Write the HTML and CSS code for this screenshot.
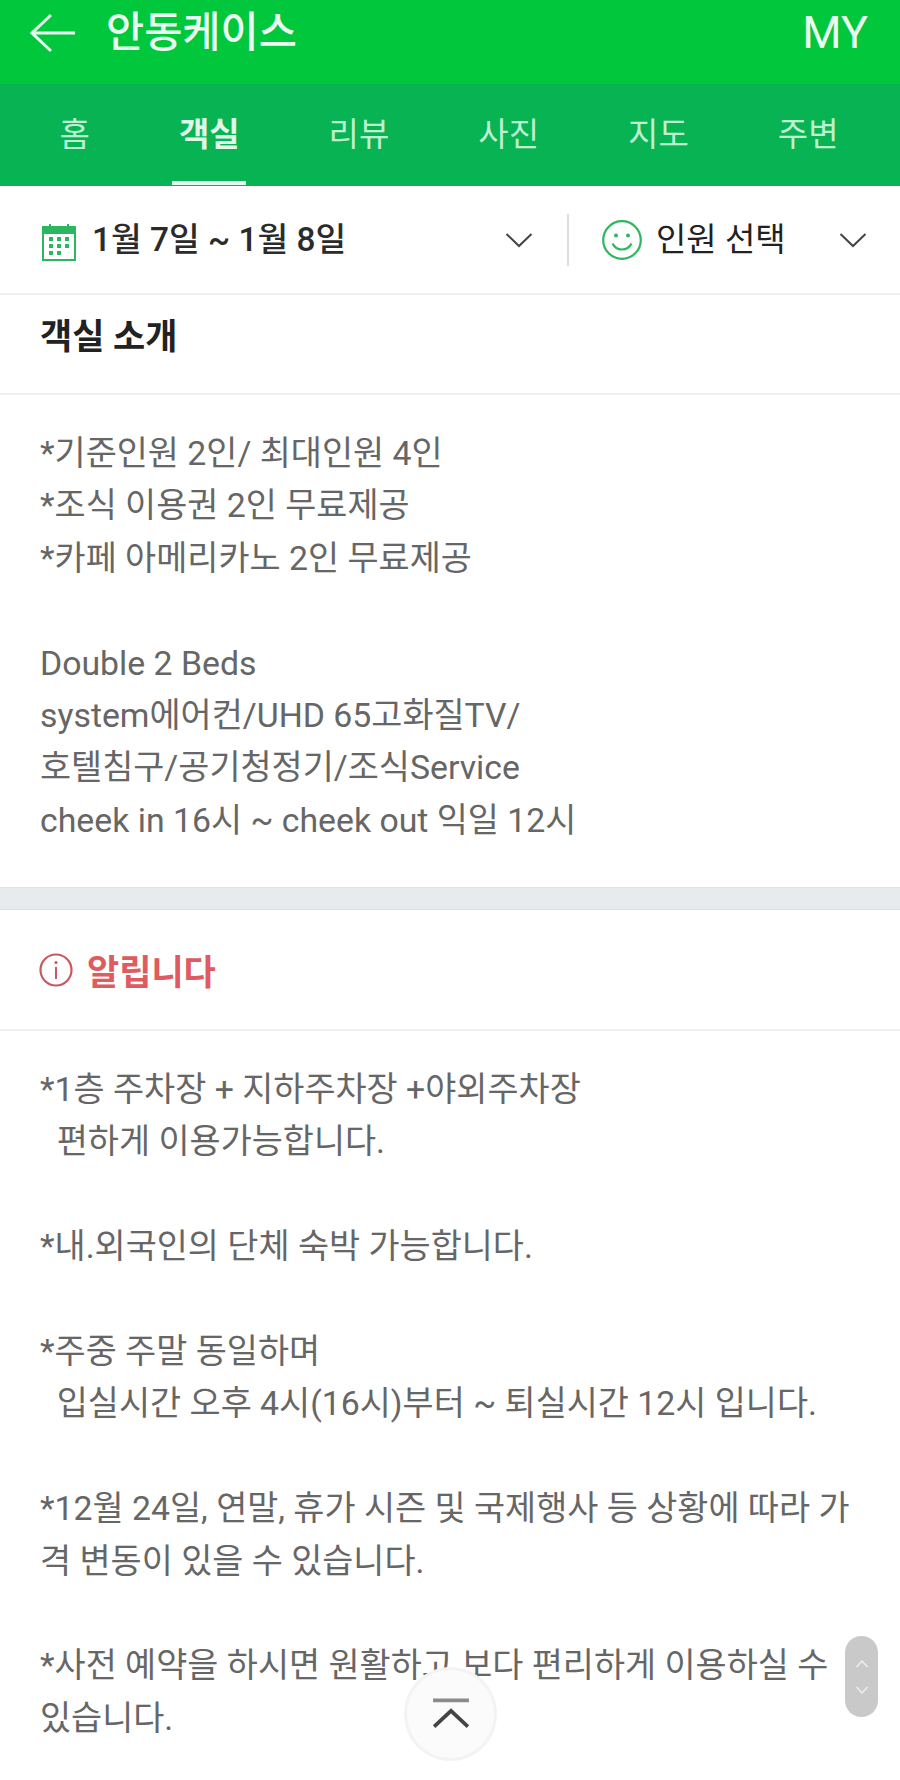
FILE: index.html
```html
<!DOCTYPE html>
<html lang="ko">
<head>
<meta charset="utf-8">
<title>안동케이스</title>
<link rel="stylesheet" href="styles.css">
</head>
<body>
<div class="page">
  <header class="topbar">
    <svg class="back" viewBox="0 0 46 40" aria-hidden="true"><path d="M45 20H2M21 2 2 20l19 18" fill="none" stroke="#e8fbee" stroke-width="3"/></svg>
    <h1 class="brand">안동케이스</h1>
    <span class="my">MY</span>
  </header>
  <nav class="tabs">
    <a class="tab">홈</a>
    <a class="tab active">객실</a>
    <a class="tab">리뷰</a>
    <a class="tab">사진</a>
    <a class="tab">지도</a>
    <a class="tab">주변</a>
  </nav>
  <div class="filter">
    <div class="filter-date">
      <svg class="cal" viewBox="0 0 34 38" aria-hidden="true">
        <rect x="1" y="4" width="32" height="33" fill="none" stroke="#2bb75f" stroke-width="2"/>
        <rect x="1" y="4" width="32" height="7" fill="#2bb75f"/>
        <path d="M8 1v5M26 1v5" stroke="#2bb75f" stroke-width="2"/>
        <path fill="#2bb75f" d="M7 14h4v4H7zM15 14h4v4h-4zM23 14h4v4h-4zM7 21h4v4H7zM15 21h4v4h-4zM23 21h4v4h-4zM7 28h4v4H7zM15 28h4v4h-4z"/>
      </svg>
      <span class="date-text">1월 7일 ~ 1월 8일</span>
      <svg class="chev" viewBox="0 0 28 16" aria-hidden="true"><path d="M1.5 2 14 14 26.5 2" fill="none" stroke="#444" stroke-width="2"/></svg>
    </div>
    <div class="filter-people">
      <svg class="smile" viewBox="0 0 40 40" aria-hidden="true">
        <circle cx="20" cy="20" r="18.8" fill="none" stroke="#2bb75f" stroke-width="2.2"/>
        <circle cx="14" cy="15.5" r="2" fill="#2bb75f"/>
        <circle cx="26" cy="15.5" r="2" fill="#2bb75f"/>
        <path d="M10.5 23.5c2 4 5.500 6 9.500 6s7.500-2 9.500-6" fill="none" stroke="#2bb75f" stroke-width="2.2"/>
      </svg>
      <span class="people-text">인원 선택</span>
      <svg class="chev" viewBox="0 0 28 16" aria-hidden="true"><path d="M1.5 2 14 14 26.5 2" fill="none" stroke="#444" stroke-width="2"/></svg>
    </div>
  </div>
  <section>
    <h2 class="sec-title">객실 소개</h2>
    <div class="sec-body room-body">*기준인원 2인/ 최대인원 4인
*조식 이용권 2인 무료제공
*카페 아메리카노 2인 무료제공

Double 2 Beds
system에어컨/UHD 65고화질TV/
호텔침구/공기청정기/조식Service
cheek in 16시 ~ cheek out 익일 12시</div>
  </section>
  <div class="band"></div>
  <section>
    <h2 class="notice-title">
      <svg class="info" viewBox="0 0 34 34" aria-hidden="true">
        <circle cx="17" cy="17" r="15.500" fill="none" stroke="#c9595f" stroke-width="2.2"/>
        <circle cx="17" cy="9.500" r="1.600" fill="#c9595f"/>
        <path d="M17 14v12" stroke="#c9595f" stroke-width="2"/>
      </svg>
      알립니다
    </h2>
    <div class="sec-body notice-body">*1층 주차장 + 지하주차장 +야외주차장
  편하게 이용가능합니다.

*내.외국인의 단체 숙박 가능합니다.

*주중 주말 동일하며
  입실시간 오후 4시(16시)부터 ~ 퇴실시간 12시 입니다.

*12월 24일, 연말, 휴가 시즌 및 국제행사 등 상황에 따라 가격 변동이 있을 수 있습니다.

*사전 예약을 하시면 원활하고 보다 편리하게 이용하실 수 있습니다.</div>
  </section>
  <button class="to-top" aria-label="맨 위로">
    <svg viewBox="0 0 36 30" aria-hidden="true"><path d="M1 2h34" stroke="#8a8a8a" stroke-width="3.500"/><path d="M2 27 18 12l16 15" fill="none" stroke="#444" stroke-width="3.500"/></svg>
  </button>
  <div class="scroller">
    <svg viewBox="0 0 14 12" aria-hidden="true"><path d="M1.500 9 7 3l5.500 6" fill="none" stroke="#eee" stroke-width="1.500"/></svg>
    <svg viewBox="0 0 14 12" aria-hidden="true"><path d="M1.500 3 7 9l5.500-6" fill="none" stroke="#eee" stroke-width="1.500"/></svg>
  </div>
</div>
</body>
</html>
```

FILE: styles.css
```css
* { box-sizing: border-box; }
html, body { margin: 0; padding: 0; background: #fff; }
body { font-family: "Roboto", "Noto Sans CJK KR", sans-serif; }
.page { position: relative; width: 900px; height: 1780px; overflow: hidden; }
.topbar { height: 84px; background: #00c73c; display: flex; align-items: flex-start; padding: 13px 32px 0 30px; color: #eafbef; }
.back { width: 46px; height: 40px; flex: none; }
.brand { margin: -7px 0 0 30px; font-size: 41.5px; line-height: 54px; font-weight: 500; color: #eafbef; }
.my { margin-left: auto; margin-top: -6px; font-size: 45px; line-height: 52px; }
.tabs { height: 102px; background: #08b354; display: flex; padding: 0 0 0 15px; }
.tab { flex: none; padding: 0 44.5px; text-align: center; color: #bdf0d0; font-size: 33px; line-height: 102px; position: relative; }
.tab.active { font-weight: 700; color: #dff8e8; }
.tab.active::after { content: ""; position: absolute; left: 50%; margin-left: -37px; bottom: 1px; width: 74px; height: 4px; background: #e6faef; }
.filter { height: 109px; border-bottom: 2px solid #efefef; display: flex; align-items: center; }
.filter-date { width: 569px; height: 52px; border-right: 2px solid #dedede; display: flex; align-items: center; padding: 0 34px 0 42px; }
.cal { width: 34px; height: 38px; flex: none; margin-top: 4px; }
.date-text { margin-left: 16px; margin-top: -7px; font-size: 33.4px; font-weight: 500; color: #2b2b2b; white-space: nowrap; }
.chev { width: 28px; height: 16px; flex: none; margin-left: auto; }
.filter-people { flex: 1; display: flex; align-items: center; padding: 0 33px 0 33px; }
.smile { width: 40px; height: 40px; flex: none; }
.people-text { margin-left: 14px; margin-top: -5px; font-size: 33px; font-weight: 400; color: #222; white-space: nowrap; }
.sec-title { margin: 0; height: 100px; border-bottom: 2px solid #efefef; padding: 0 40px; font-size: 35px; line-height: 86px; font-weight: 700; color: #222; }
.sec-body { padding: 33px 40px 0; font-size: 33.8px; line-height: 52.4px; color: #666; white-space: pre-wrap; word-break: break-all; }
.room-body { height: 492px; }
.band { height: 23px; background: #e7ebee; border-top: 1px solid #dfe2e5; border-bottom: 1px solid #dcdfe2; }
.notice-title { margin: 0; height: 121px; border-bottom: 2px solid #efefef; padding: 0 39px; display: flex; align-items: center; font-size: 35px; font-weight: 700; color: #de5b60; }
.info { width: 34px; height: 34px; flex: none; margin-right: 14px; }
.notice-body { padding-top: 33px; }
.to-top { position: absolute; left: 404px; top: 1667px; width: 93px; height: 94px; border-radius: 50%; border: 3px solid #f3f3f3; background: #fbfbfb; padding: 0; display: flex; align-items: center; justify-content: center; }
.to-top svg { width: 38px; height: 32px; }
.scroller { position: absolute; left: 845px; top: 1636px; width: 33px; height: 81px; border-radius: 17px; background: #c9c9c9; display: flex; flex-direction: column; align-items: center; justify-content: center; gap: 14px; }
.scroller svg { width: 14px; height: 12px; }
```
